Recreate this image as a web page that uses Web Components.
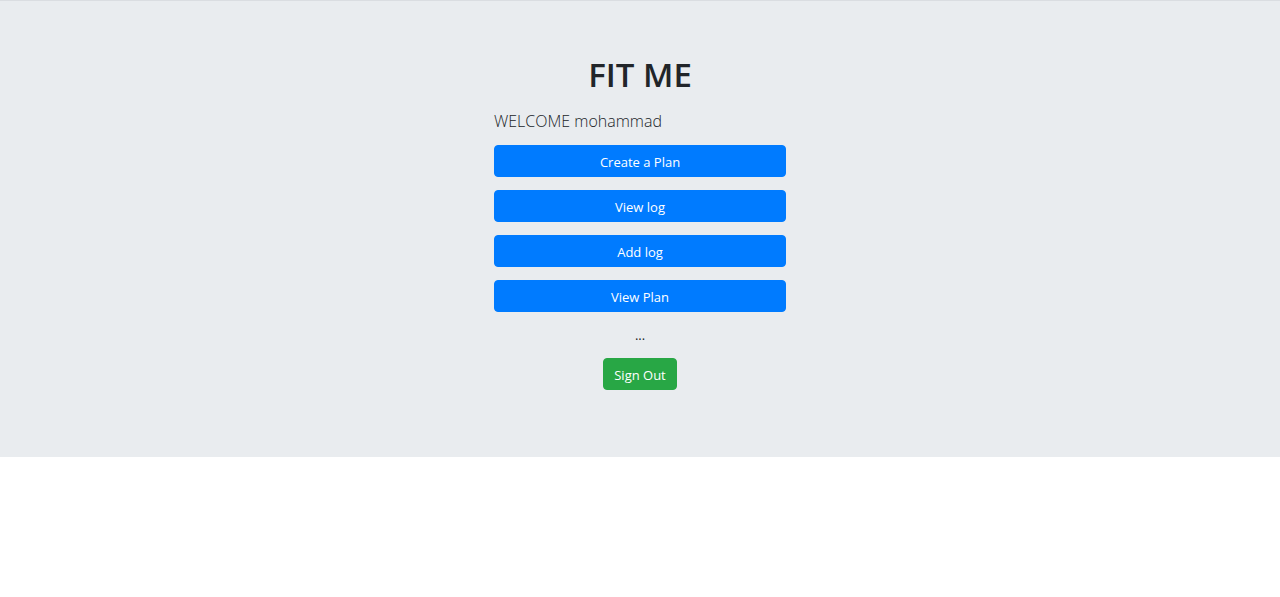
<!DOCTYPE html>
<html lang="en">
<head>
<meta charset="utf-8">
<meta name="viewport" content="width=device-width, initial-scale=1">
<title>FIT ME</title>
<style>
body { margin: 0; background: #fff; color: #212529; font: 13px/21px "Open Sans", "Noto Sans", sans-serif; }
</style>
</head>
<body>
<fit-dashboard>
  <fit-greeting slot="greeting">mohammad</fit-greeting>
  <fit-button>Create a Plan</fit-button>
  <fit-button>View log</fit-button>
  <fit-button>Add log</fit-button>
  <fit-button>View Plan</fit-button>
  <fit-button slot="footer" variant="success">Sign Out</fit-button>
</fit-dashboard>
<script>
const define = (name, html) => customElements.define(name, class extends HTMLElement {
  constructor() {
    super();
    this.attachShadow({ mode: 'open' }).innerHTML = html;
  }
});

define('fit-button', `
<style>
:host { display: block; }
button { display: block; box-sizing: border-box; width: 100%; height: 32px; margin: 0; padding: 2px 10px 0;
  border: 1px solid #007bff; border-radius: 4px; background: #007bff; color: #fff;
  font: inherit; text-align: center; cursor: pointer; }
:host([variant="success"]) button { background: #28a745; border-color: #28a745; }
</style>
<button type="button"><slot></slot></button>`);

define('fit-greeting', `
<style>
:host { display: block; }
p { margin: 0; font-size: 16px; line-height: 26px; font-weight: 300; }
</style>
<p>WELCOME <slot></slot></p>`);

define('fit-dashboard', `
<style>
:host { display: block; }
main { display: flex; justify-content: center; padding: 54px 16px 67px; border-top: 1px solid #dadde1; background: #e9ecef; }
section { width: 100%; max-width: 292px; }
h1 { margin: 0 0 14px; font-size: 33px; line-height: 39px; font-weight: 600; text-align: center; }
nav { display: grid; gap: 13px; margin: 11px 0 13px; }
.more { margin: 0 0 12px; text-align: center; }
footer { display: flex; justify-content: center; }
</style>
<main>
  <section>
    <h1>FIT ME</h1>
    <slot name="greeting"></slot>
    <nav><slot></slot></nav>
    <p class="more">...</p>
    <footer><slot name="footer"></slot></footer>
  </section>
</main>`);
</script>
</body>
</html>
